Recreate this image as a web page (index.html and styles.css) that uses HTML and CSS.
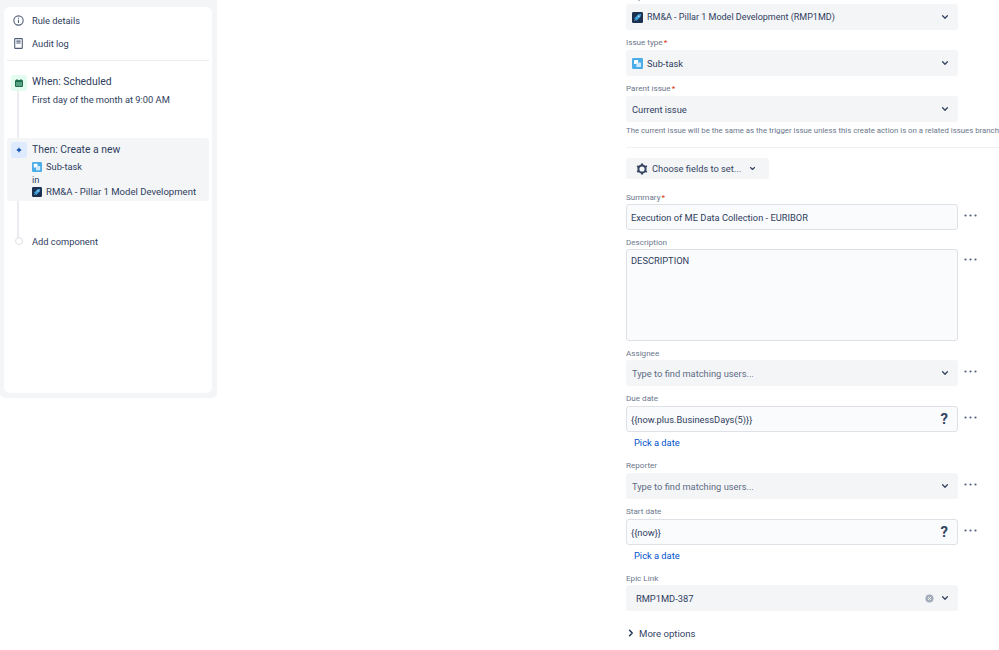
FILE: index.html
```html
<!DOCTYPE html>
<html lang="en">
<head>
<meta charset="utf-8">
<title>Automation rule</title>
<link rel="stylesheet" href="styles.css">
</head>
<body>
<svg class="defs" width="0" height="0" aria-hidden="true">
  <symbol id="subtask" viewBox="0 0 12 12">
    <rect width="12" height="12" rx="1.500" fill="#4bade8"/>
    <rect x="2.200" y="2.200" width="4.400" height="4.400" rx=".6" fill="#fff"/>
    <rect x="4.800" y="4.800" width="5" height="5" rx=".6" fill="#cfeafa"/>
  </symbol>
  <symbol id="project" viewBox="0 0 12 12">
    <rect width="12" height="12" rx="1.500" fill="#1c3150"/>
    <path d="M2.400 7 6.600 2.800 10 2l-.8 3.400L5 9.600z" fill="#3f9fd8"/>
    <circle cx="7.300" cy="4.700" r=".9" fill="#bfe3f7"/>
    <path d="M2 10l1.300-1.900.7.700z" fill="#8cc4e6"/>
  </symbol>
  <symbol id="chev" viewBox="0 0 8 6">
    <path d="M1.600 1.800 4 4.200l2.400-2.400" fill="none" stroke="#344563" stroke-width="1.300" stroke-linecap="round" stroke-linejoin="round"/>
  </symbol>
  <symbol id="dots" viewBox="0 0 13 3">
    <circle cx="1.500" cy="1.500" r="1.100" fill="#505f79"/>
    <circle cx="6.500" cy="1.500" r="1.100" fill="#505f79"/>
    <circle cx="11.500" cy="1.500" r="1.100" fill="#505f79"/>
  </symbol>
</svg>
<div class="page">
  <aside class="rail">
    <nav class="card">
      <div class="track"></div>
      <a class="nav-row">
        <svg class="nav-icon" viewBox="0 0 12 12"><circle cx="6" cy="6" r="4.300" fill="none" stroke="#505f79" stroke-width="1"/><path d="M6 5.400v3M6 3.400v1" stroke="#505f79" stroke-width="1"/></svg>
        <span>Rule details</span>
      </a>
      <a class="nav-row">
        <svg class="nav-icon" viewBox="0 0 12 12"><rect x="2.500" y="1.500" width="7" height="9" rx=".6" fill="none" stroke="#505f79" stroke-width="1"/><path d="M4 3.800h4M4 5.600h4" stroke="#505f79" stroke-width="1"/></svg>
        <span>Audit log</span>
      </a>
      <div class="rail-rule"></div>
      <div class="step step-when">
        <div class="step-icon icon-green">
          <svg viewBox="0 0 10 10" width="10" height="10"><rect x="1" y="2" width="8" height="7" rx="1" fill="#216e4e"/><rect x="2" y="4" width="6" height="4" fill="#57a283"/><path d="M3 1v2M7 1v2" stroke="#216e4e" stroke-width="1"/></svg>
        </div>
        <div class="step-body">
          <div class="step-title">When: Scheduled</div>
          <div class="step-line step-gap">First day of the month at 9:00 AM</div>
        </div>
      </div>
      <div class="step step-then">
        <div class="step-icon icon-blue">
          <svg viewBox="0 0 10 10" width="10" height="10"><path d="M5 2.800v4.400M2.800 5h4.400" stroke="#0747a6" stroke-width="1.300"/></svg>
        </div>
        <div class="step-body">
          <div class="step-title">Then: Create a new</div>
          <div class="step-line with-icon step-gap"><svg class="mini mini-side"><use href="#subtask"/></svg>Sub-task</div>
          <div class="step-line">in</div>
          <div class="step-line with-icon side-project"><svg class="mini mini-side"><use href="#project"/></svg>RM&amp;A - Pillar 1 Model Development</div>
        </div>
      </div>
      <div class="add-row">
        <span class="dot"></span>
        <span>Add component</span>
      </div>
    </nav>
  </aside>

  <main class="form">
    <div class="label clipped">Project<i>*</i></div>
    <div class="field"><div class="select"><svg class="mini"><use href="#project"/></svg><span class="grow project-name">RM&amp;A - Pillar 1 Model Development (RMP1MD)</span><svg class="chev"><use href="#chev"/></svg></div></div>

    <div class="label">Issue type<i>*</i></div>
    <div class="field"><div class="select"><svg class="mini"><use href="#subtask"/></svg><span class="grow">Sub-task</span><svg class="chev"><use href="#chev"/></svg></div></div>

    <div class="label">Parent issue<i>*</i></div>
    <div class="field"><div class="select"><span class="grow">Current issue</span><svg class="chev"><use href="#chev"/></svg></div></div>

    <div class="help">The current issue will be the same as the trigger issue unless this create action is on a related issues branch.</div>
    <div class="form-rule"></div>

    <button class="choose" type="button">
      <svg class="gear" viewBox="0 0 12 12"><circle cx="6" cy="6" r="3.600" fill="none" stroke="#344563" stroke-width="2"/><path d="M6 .4v2M6 9.600v2M1.150 3.200l1.730 1M9.120 8l1.730 1M1.150 8.800l1.730-1M9.120 4l1.730-1" stroke="#344563" stroke-width="2"/></svg>
      <span>Choose fields to set...</span>
      <svg class="chev chev-small"><use href="#chev"/></svg>
    </button>

    <div class="label label-summary">Summary<i>*</i></div>
    <div class="field"><div class="input">Execution of ME Data Collection - EURIBOR</div><svg class="more"><use href="#dots"/></svg></div>

    <div class="label label-tight">Description</div>
    <div class="field field-top"><div class="input textarea">DESCRIPTION</div><svg class="more"><use href="#dots"/></svg></div>

    <div class="label label-tight">Assignee</div>
    <div class="field"><div class="select muted"><span class="grow">Type to find matching users...</span><svg class="chev"><use href="#chev"/></svg></div><svg class="more"><use href="#dots"/></svg></div>

    <div class="label">Due date</div>
    <div class="field"><div class="input"><span class="grow">{{now.plus.BusinessDays(5)}}</span><b class="q">?</b></div><svg class="more"><use href="#dots"/></svg></div>
    <a class="pick">Pick a date</a>

    <div class="label label-after-pick">Reporter</div>
    <div class="field"><div class="select muted"><span class="grow">Type to find matching users...</span><svg class="chev"><use href="#chev"/></svg></div><svg class="more"><use href="#dots"/></svg></div>

    <div class="label">Start date</div>
    <div class="field"><div class="input"><span class="grow">{{now}}</span><b class="q">?</b></div><svg class="more"><use href="#dots"/></svg></div>
    <a class="pick">Pick a date</a>

    <div class="label label-epic">Epic Link</div>
    <div class="field"><div class="select select-epic"><span class="grow">RMP1MD-387</span>
      <svg class="clear" viewBox="0 0 10 10"><circle cx="5" cy="5" r="4.500" fill="#a5adba"/><path d="M3.400 3.400l3.200 3.200M6.600 3.400 3.400 6.600" stroke="#f4f5f7" stroke-width="1.100"/></svg>
      <svg class="chev"><use href="#chev"/></svg></div></div>

    <div class="more-options">
      <svg width="6" height="8" viewBox="0 0 6 8"><path d="M1.600 1.200 4.200 4 1.600 6.800" fill="none" stroke="#253858" stroke-width="1.500" stroke-linecap="round" stroke-linejoin="round"/></svg>
      <span>More options</span>
    </div>
  </main>
</div>
</body>
</html>
```
FILE: styles.css
```css
* { box-sizing: border-box; }
html, body { margin: 0; padding: 0; height: 100%; overflow: hidden; background: #fff; }
body {
  font-family: Roboto, "Open Sans", sans-serif;
  font-size: 9.300px;
  color: #2f405e;
}
.defs { position: absolute; }
.page { display: flex; align-items: flex-start; height: 650px; }

/* left rail */
.rail {
  width: 217px;
  height: 398px;
  flex: none;
  padding: 7px 5px 5px 4px;
  background: #f4f5f7;
  border-radius: 0 0 5px 5px;
}
.card {
  position: relative;
  height: 386px;
  padding: 2px 3px 0;
  background: #fff;
  border-radius: 6px;
  display: flex;
  flex-direction: column;
}
.track {
  position: absolute;
  left: 13px;
  top: 83px;
  width: 2px;
  height: 150px;
  background: #ebecf0;
}
.nav-row {
  display: flex;
  align-items: center;
  height: 23px;
  padding-left: 5px;
  gap: 7px;
}
.nav-icon { width: 13px; height: 13px; flex: none; }
.rail-rule { height: 1px; margin: 5px 0 0; background: #ebecf0; flex: none; }
.step { position: relative; display: flex; gap: 5px; padding: 0 4px; flex: none; }
.step-when { margin-top: 14px; height: 32px; }
.step-then {
  margin-top: 31px;
  height: 63px;
  padding-top: 4px;
  background: #f4f5f7;
  border-radius: 3px;
}
.step-icon {
  width: 16px;
  height: 16px;
  flex: none;
  display: flex;
  align-items: center;
  justify-content: center;
  border-radius: 3px;
}
.icon-green { background: #e3fcef; }
.icon-blue { background: #deebff; }
.step-title { font-size: 10.400px; line-height: 14px; }
.step-then .step-title { padding-top: 1px; }
.step-then .step-gap { margin-top: 4px; }
.step-line { line-height: 12.500px; white-space: nowrap; }
.step-gap { margin-top: 5px; }
.side-project { font-size: 9.550px; }
.project-name { font-size: 9px; }
.with-icon { display: flex; align-items: center; }
.mini { width: 11px; height: 11px; flex: none; margin-right: 4px; }
.mini-side { width: 10px; height: 10px; }
.add-row {
  position: relative;
  display: flex;
  align-items: center;
  height: 14px;
  margin-top: 33px;
  padding-left: 4px;
  gap: 5px;
  flex: none;
}
.dot {
  width: 8px;
  height: 8px;
  margin: 0 4px;
  border: 1px solid #dfe1e6;
  border-radius: 50%;
  background: #fff;
}

/* form */
.form {
  width: 373px;
  margin-left: 409px;
  flex: none;
  margin-top: -10px;
}
.label {
  height: 12px;
  margin: 6px 0 2px;
  font-size: 8.100px;
  line-height: 12px;
  color: #6b778c;
}
.label i { color: #de350b; font-style: normal; margin-left: 1px; }
.clipped { margin-top: 0; }
.label-summary { margin-top: 12px; margin-bottom: 1px; }
.label-tight { margin-top: 6px; margin-bottom: 1px; }
.label-after-pick { margin-top: 9px; }
.label-epic { margin-top: 9px; margin-bottom: 1px; }
.field { display: flex; align-items: center; gap: 6px; }
.select, .input {
  width: 332px;
  flex: none;
  display: flex;
  align-items: center;
  border-radius: 3px;
}
.select {
  height: 26px;
  padding: 0 9px 0 6px;
  background: #f4f5f7;
}
.muted { color: #5e6c84; }
.grow { flex: 1; }
.chev { width: 8px; height: 6px; flex: none; }
.chev-small { width: 7px; height: 5px; }
.input {
  height: 26px;
  padding: 0 9px 0 4px;
  background: #fafbfc;
  border: 1px solid #dfe1e6;
}
.textarea { height: 92px; align-items: flex-start; padding-top: 5px; }
.field-top { align-items: flex-start; }
.field-top .more { margin-top: 9px; margin-bottom: 0; }
.more { width: 13px; height: 3px; flex: none; margin-bottom: 4px; }
.q { font-size: 15px; line-height: 1; color: #344563; }
.pick {
  display: block;
  height: 14px;
  margin: 4px 0 0 8px;
  line-height: 14px;
  color: #0052cc;
}
.help {
  margin-top: 3px;
  font-size: 7.800px;
  line-height: 12px;
  white-space: nowrap;
  color: #6b778c;
}
.form-rule { height: 1px; margin-top: 10px; background: #f0f1f3; }
.choose {
  display: flex;
  align-items: center;
  gap: 4px;
  width: 143px;
  height: 21px;
  margin-top: 10px;
  padding: 0 0 0 10px;
  border: 0;
  border-radius: 3px;
  background: #f4f5f7;
  font: inherit;
  color: #344563;
}
.gear { width: 12px; height: 12px; flex: none; }
.choose .chev { margin-left: 4px; }
.select-epic { padding-left: 10px; }
.clear { width: 9px; height: 9px; margin-right: 7px; flex: none; }
.more-options {
  display: flex;
  align-items: center;
  gap: 5px;
  height: 14px;
  margin-top: 15px;
  padding-left: 2px;
  font-size: 9.600px;
  color: #344563;
}
```
